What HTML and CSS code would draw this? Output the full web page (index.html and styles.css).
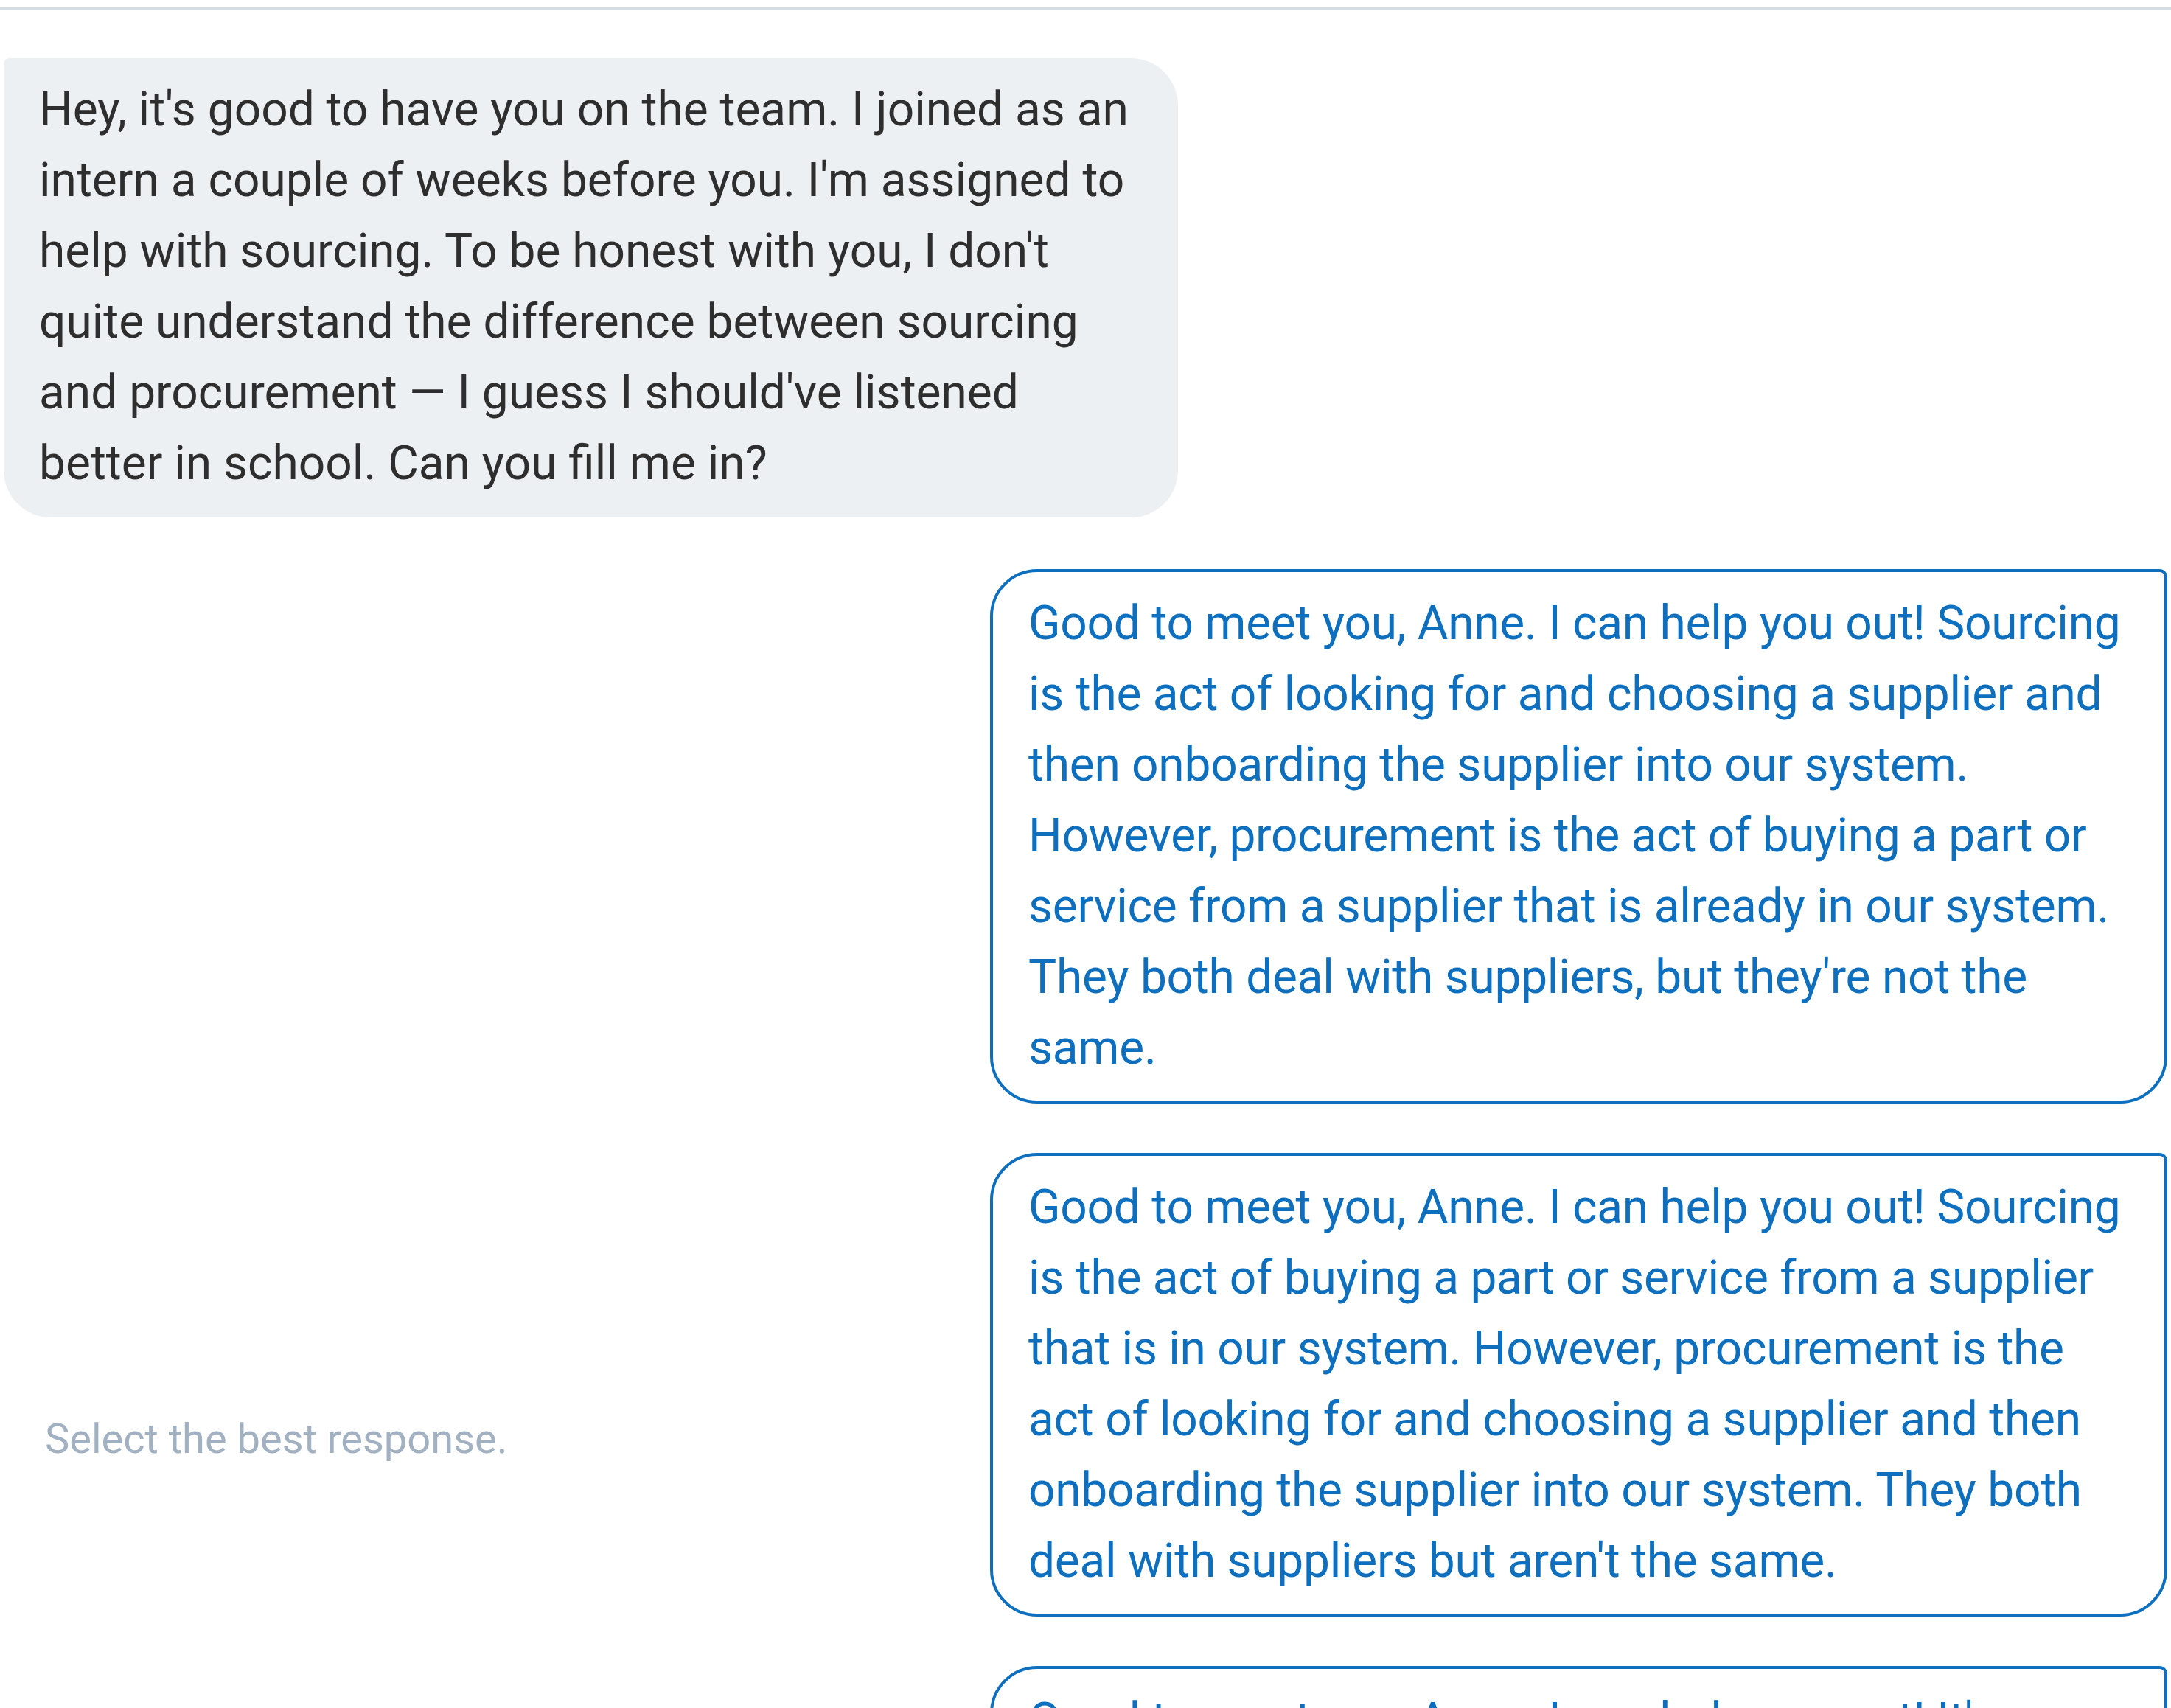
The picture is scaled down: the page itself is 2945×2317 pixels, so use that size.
FILE: index.html
```html
<!DOCTYPE html>
<html lang="en">
<head>
<meta charset="utf-8">
<title>Chat scenario</title>
<link rel="stylesheet" href="styles.css">
</head>
<body>
<div class="topbar"></div>
<main class="chat">
  <div class="bubble incoming">Hey, it's good to have you on the team. I joined as an intern a couple of weeks before you. I'm assigned to help with sourcing. To be honest with you, I don't quite understand the difference between sourcing and procurement — I guess I should've listened better in school. Can you fill me in?</div>
  <div class="answer-row">
    <div class="prompt">Select the best response.</div>
    <div class="options">
      <button class="bubble option">Good to meet you, Anne. I can help you out! Sourcing is the act of looking for and choosing a supplier and then onboarding the supplier into our system. However, procurement is the act of buying a part or service from a supplier that is already in our system. They both deal with suppliers, but they're not the same.</button>
      <button class="bubble option">Good to meet you, Anne. I can help you out! Sourcing is the act of buying a part or service from a supplier that is in our system. However, procurement is the act of looking for and choosing a supplier and then onboarding the supplier into our system. They both deal with suppliers but aren't the same.</button>
      <button class="bubble option">Good to meet you, Anne. I can help you out! It's easy to mix them up. Sourcing and procurement are really the same thing: they both mean buying a part or service from a supplier, so you can use either word.</button>
    </div>
  </div>
</main>
</body>
</html>
```

FILE: styles.css
```css
html, body {
  margin: 0;
  padding: 0;
  background: #ffffff;
}

body {
  font-family: Roboto, "Liberation Sans", Arial, sans-serif;
  font-size: 64px;
  line-height: 96px;
  overflow: hidden;
}

.topbar {
  height: 10px;
  border-bottom: 4px solid #d3dbe3;
}

.chat {
  padding: 65px 5px 0 5px;
}

.bubble {
  box-sizing: border-box;
  font: inherit;
  text-align: left;
}

.incoming {
  width: 1593px;
  background: #edf0f3;
  color: #2e2e2e;
  padding: 22px 48px 25px 48px;
  border-radius: 8px 64px 64px 64px;
}

.answer-row {
  display: flex;
  justify-content: space-between;
  margin-top: 70px;
}

.prompt {
  color: #a2b1c1;
  font-size: 56px;
  line-height: 90px;
  padding: 1135px 0 0 56px;
}

.options {
  display: flex;
  flex-direction: column;
  gap: 67px;
}

.option {
  display: block;
  width: 1597px;
  background: #ffffff;
  color: #0d6fbd;
  border: 4px solid #0d6fbd;
  border-radius: 64px 10px 64px 64px;
  padding: 22px 40px 23px 48px;
  margin: 0;
  letter-spacing: -0.25px;
  cursor: pointer;
}
```
